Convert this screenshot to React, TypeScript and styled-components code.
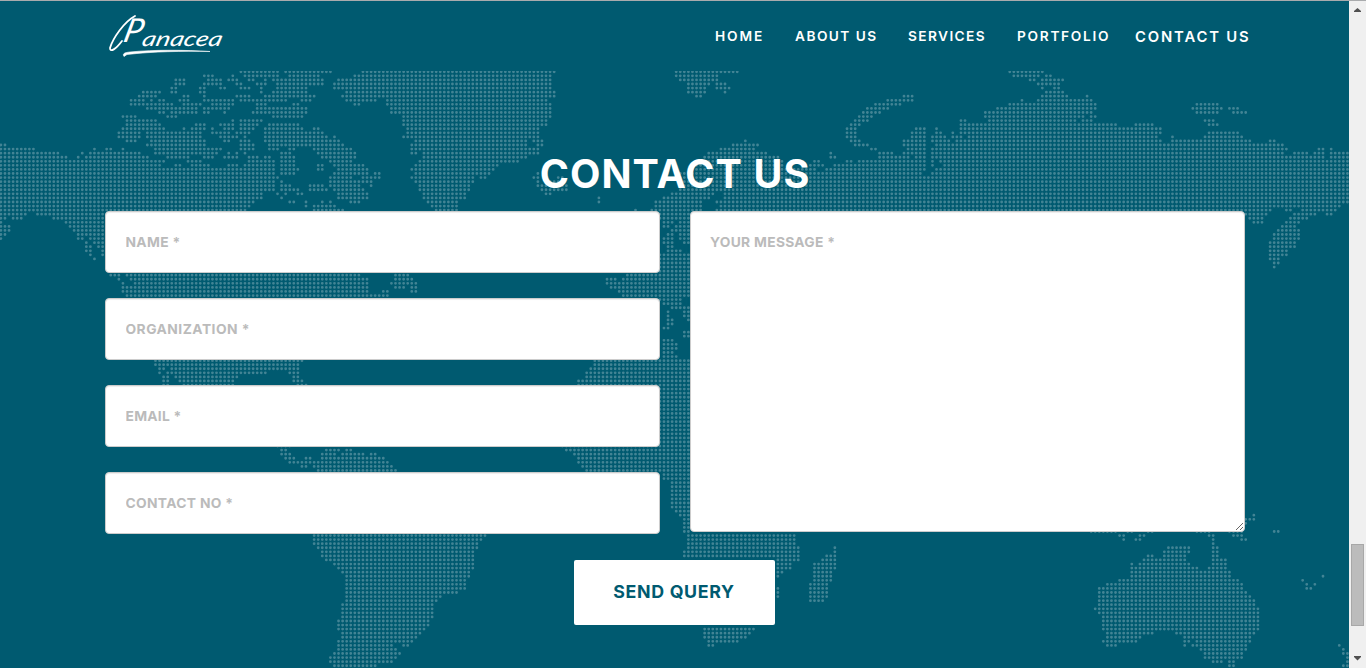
import React from "react";
import styled, { createGlobalStyle } from "styled-components";

const GlobalStyle = createGlobalStyle`
  *, *::before, *::after { box-sizing: border-box; }
  body { margin: 0; background: #005a70; overflow: hidden; }
  body, input, textarea, button { font-family: Inter, "Liberation Sans", sans-serif; }
`;

/*
 * Dotted world map. Each entry is one row of dots; a letter selects the strip
 * the following spans are measured from, and spans are in thirds of a pixel.
 */
const STRIPS: Record<string, number> = {
  A: 0, B: 1020, C: 2040, D: 3048, E: 270, F: 1620, G: 780, H: 1680,
};

const ROWS: Record<number, string> = {
  0: "A718-838 852-996 B64-645 1003-1050 C0-176 984-1050 D0-83",
  1: "A608-642 697-700 730-838 864-960 B40-635 1003-1050 C0-115 996-1050 D0-70 88-105",
  2: "A524-556 620-666 684-716 740-765 790-800 814-972 1008-1050 B4-635 1015-1050 C0-115 1046-1050 D40-56 76-144",
  3: "A524-556 608-666 706-728 765-800 826-972 998-1050 B0-635 C20-90 106-138 D64-132",
  4: "A511-532 596-616 656-678 718-755 778-790 826-924 998-1050 B0-635 C20-80 106-150 D76-80 112-132",
  5: "A425-484 511-532 596-616 778-790 814-924 1034-1050 B12-645 C20-80 132-138 D88-144",
  6: "A412-470 547-568 608-616 704-752 790-946 1022-1050 B28-645 C44-66 668-702 D76-156 210-214",
  7: "A388-434 450-460 474-496 535-568 608-702 716-860 900-936 B14-108 135-620 C618-702 1022-1028 D64-230",
  8: "A388-520 547-604 632-702 765-800 876-898 B40-60 136-635 C582-664 984-1050 D0-240 540-606",
  9: "A436-592 608-690 765-920 B148-635 C558-628 948-1050 D0-240 528-618 638-668",
  10: "A474-496 511-592 608-630 670-676 755-920 B148-635 C545-604 912-1050 D0-230 540-606 650-690",
  11: "A364-408 500-532 814-910 B188-635 C533-580 912-1050 D0-206 220-240",
  12: "A376-470 695-700 716-788 B188-622 C521-568 838-860 924-1050 D0-180 196-230 564-596",
  13: "A376-484 584-616 656-704 716-775 802-898 B188-622 C508-545 838-1050 D0-302 355-412 576-606",
  14: "A364-496 547-556 570-616 632-642 668-704 716-765 790-910 936-958 B198-600 C496-533 704-740 765-772 838-1050 D0-436",
  15: "A352-424 436-604 632-690 704-752 790-970 B198-600 C496-533 692-740 765-785 814-822 838-1050 D0-436 576-668",
  16: "A352-420 436-604 656-714 730-740 790-982 998-1008 B188-600 C496-530 692-740 752-800 814-850 860-1050 D0-424 464-472 562-680",
  17: "A376-408 448-616 670-690 716-752 790-1020 B222-565 578-608 C190-198 508-540 668-740 752-810 826-1050 D0-436 464-704 758-778",
  18: "A0-18 436-616 716-765 802-1030 B0-10 210-560 588-608 C156-234 520-568 668-740 765-1050 D0-802",
  19: "A0-104 280-286 316-334 366-370 460-664 716-765 802-836 864-884 936-1050 B0-36 210-600 C120-222 570-592 680-740 752-1050 D0-812 904-922 942-946",
  20: "A0-176 244-248 268-420 460-650 680-690 706-716 730-740 840-874 948-1050 B0-48 210-230 246-600 C84-260 448-454 594-640 668-740 752-1050 D0-802 832-874 892-922 942-998",
  21: "A0-200 232-238 256-445 498-568 608-642 670-714 742-778 790-812 840-886 960-1050 B0-48 246-560 C70-296 448-466 594-692 704-740 752-1050 D0-922 942-998",
  22: "A0-496 560-604 740-824 838-886 984-1050 B0-36 234-538 C60-310 400-420 496-516 533-740 752-765 778-1050 D0-1000",
  23: "A0-484 522-544 570-628 680-714 730-824 840-886 948-970 998-1050 B0-72 222-475 C50-310 388-430 460-740 752-765 790-1050 D0-1000",
  24: "A0-824 840-898 948-970 1010-1050 B0-84 210-466 C30-412 436-740 765-1050 D0-1000",
  25: "A0-824 838-886 998-1050 B12-84 96-120 222-454 588-596 C0-725 752-1050 D0-1000",
  26: "A0-836 984-1050 B0-38 64-120 210-400 418-440 578-600 650-670 C0-1050 D0-1000",
  27: "A0-824 840-850 984-1050 B0-72 76-96 222-400 588-600 625-670 C0-1050 D0-1000",
  28: "A0-824 840-874 924-972 984-1050 B0-62 90-96 234-388 588-680 C0-1050 D0-1000",
  29: "A0-824 840-898 924-982 1000-1050 B0-72 234-388 600-680 1015-1050 C0-110 120-1050 D0-1000",
  30: "A0-790 826-836 850-860 888-910 1010-1050 B0-84 246-376 612-632 990-1050 C0-106 130-1050 D0-1000",
  31: "A0-790 840-848 1010-1050 B0-84 246-376 772-778 966-1050 C0-90 130-1050 D0-1000",
  32: "A0-765 864-884 914-920 960-966 984-992 B28-60 258-352 772-778 942-1050 C0-66 108-1050 D0-1000",
  33: "A0-752 912-920 936-1008 B270-352 942-1050 C0-66 118-1050 D0-970",
  34: "A0-740 936-1030 B282-352 882-888 930-1050 C0-66 106-1050 D0-765 806-826 856-960",
  35: "A0-78 106-330 B960-1050 C0-30 D684-752 832-900 928-948",
  36: "A0-18 36-68 156-330 B960-1050 C0-30 D696-740 820-874",
  37: "A0-6 192-330 B966-1000 1015-1050 C0-30 D708-740 806-850",
  38: "A0-30 204-330 B966-990 1003-1050 C0-30 D796-838",
  39: "A0-30 218-330 B990-1035 C0-30 D782-850",
  40: "A0-18 230-330 B978-1000 1015-1050 C0-30 D770-850",
  41: "A0-6 230-250 268-330 B966-1000 1027-1050 C0-30 D770-850",
  42: "A256-262 280-330 B966-1000 1027-1050 C8-30 D758-838",
  43: "A256-274 292-330 B978-1000 D758-838",
  44: "A256-274 304-330 B978-1022 C0-4 D758-814",
  45: "A268-274 304-330 B960-1050 C0-30 D758-814",
  46: "A280-286 B960-1050 C0-30 D758-790",
  47: "B960-1050 C0-30 D770-790",
  48: "B960-1050 C0-30 D770-776",
  49: "B960-1050 C0-30",
  50: "E56-90 106-810 912-958 F258-450",
  51: "E82-90 118-835 912-970 F196-230 246-450",
  52: "E94-100 130-835 900-982 F196-230 234-450",
  53: "E94-100 106-835 912-946 960-982 F208-450",
  54: "E94-835 876-896 960-982 F232-450",
  55: "E106-896 F244-450",
  56: "F360-425",
  57: "F366-425",
  58: "F390-450",
  59: "F380-390 430-450",
  60: "F380-390 430-450",
  61: "F380-400 442-450",
  62: "F380-400",
  63: "F366-390",
  64: "F430-450",
  65: "F430-450",
  66: "F366-400",
  67: "F366-412",
  68: "F366-412",
  69: "F366-400",
  70: "F366-412",
  71: "E192-636 F160-450",
  72: "E192-208 216-628 F160-450",
  73: "E204-224 240-628 F148-450",
  74: "E204-208 230-530 596-628 F136-450",
  75: "E216-236 254-445 608-628 F136-450",
  76: "E216-236 264-432 608-636 F112-450",
  77: "E216-236 278-432 620-648 F112-450",
  92: "E560-600 F64-450",
  93: "E570-590 704-750 766-786 F76-450",
  94: "E570-600 692-736 752-820 838-858 F100-450",
  95: "E582-614 644-662 692-882 F112-450",
  96: "E594-664 668-896 F112-450",
  97: "E632-650 668-908 F124-450",
  98: "E680-918 F136-450",
  99: "F366-450",
  100: "F366-450",
  108: "F404-450",
  109: "F416-450 D708-716",
  110: "F430-450 D684-716",
  111: "F430-450 D684-692",
  112: "F430-450",
  113: "F430-450 D222-300 330-350 392-410 540-580 640-680 770-790",
  114: "G156-676 H380-706 D306-326 366-388 574-594 648-680",
  115: "G156-664 H380-706 D318-326 354-376 586-594 672-692",
  116: "G156-652 H380-706 D586-594",
  117: "G168-652 H380-718 820-826 D452-520 586-606",
  118: "G180-640 H368-718 820-826 D440-520 586-606",
  119: "G180-640 H368-718 796-826 D392-412 440-508 586-606",
  120: "G194-640 H650-718 782-826 D380-508 586-630",
  121: "G218-640 H650-694 758-826 D342-350 366-520 586-630",
  122: "G230-640 H650-694 758-826 D342-545 574-630",
  123: "G242-630 H650-670 758-814 D342-642",
  124: "G254-630 H650-656 758-814 D342-642 918-922",
  125: "G254-616 H758-814 D306-666 856-862",
  126: "G254-616 H746-802 D270-680 868-874 892-898",
  127: "G254-616 H650-656 746-802 D244-680 868-886",
  128: "G254-592 H650-656 746-802 D244-692",
  129: "G254-545 H650-656 746-802 D244-704",
  130: "G254-532 H746-790 D244-716",
  131: "G242-520 D244-716",
  132: "G242-520 D232-728",
  133: "G242-520 D244-728",
  134: "G242-520 D256-728",
  135: "G230-508 D256-728",
  136: "G230-508 D256-728",
  137: "G230-496 H430-584 D256-728",
  138: "G242-484 H430-572 D268-412 476-716",
  139: "G242-472 H430-560 D268-374 500-704",
  140: "G230-460 H442-532 D256-362 500-522 536-704",
  141: "G230-400 428-446 H442-460 D268-300 500-508 524-692 966-972",
  142: "G230-410 D548-692 978-984",
  143: "G218-422 D560-680 978-998",
  144: "G206-410 D560-680 990-998",
  145: "G206-398 D586-618 636-656 990-998",
  146: "G218-350 D636-656 978-998",
};
for (let r = 78; r <= 91; r++) ROWS[r] = "F360-450";
for (let r = 101; r <= 107; r++) ROWS[r] = "F392-450";

const PITCH = 4.068;
const FIRST_X = 0.9;
const FIRST_Y = 0.8;

function buildMap(): string {
  let d = "";
  Object.entries(ROWS).forEach(([row, spans]) => {
    const columns = new Set<number>();
    let offset = 0;
    spans.split(" ").forEach((token) => {
      let span = token;
      if (STRIPS[token[0]] !== undefined) {
        offset = STRIPS[token[0]];
        span = token.slice(1);
      }
      const [from, to] = span.split("-").map((n) => (Number(n) + offset) / 3);
      const first = Math.ceil((from - FIRST_X - 0.6) / PITCH);
      const last = Math.floor((to - FIRST_X + 0.6) / PITCH);
      for (let c = Math.max(first, 0); c <= last; c++) columns.add(c);
    });
    const y = (FIRST_Y + Number(row) * PITCH).toFixed(2);
    columns.forEach((c) => {
      d += `M${(FIRST_X + c * PITCH).toFixed(2)} ${y}h.01`;
    });
  });
  return d;
}

const MAP_PATH = buildMap();

const Window = styled.div`
  display: flex;
  width: 1366px;
  height: 668px;
  border-top: 1px solid #a9abad;
  background: #005a70;
  overflow: hidden;
`;

const Page = styled.div`
  flex: 1;
  display: flex;
  flex-direction: column;
  min-width: 0;
`;

const Header = styled.header`
  display: flex;
  justify-content: space-between;
  flex: none;
  height: 70px;
  padding: 0 100px 0 105px;
`;

const Logo = styled.svg`
  display: block;
  width: 124px;
  height: 66px;
`;

const Nav = styled.nav`
  display: flex;
  align-items: flex-start;
  padding-top: 26px;
`;

const NavLink = styled.a<{ $width: number; $gap: number; $tracking: number; $active?: boolean }>`
  width: ${(p) => p.$width}px;
  margin-right: ${(p) => p.$gap}px;
  color: #fff;
  font-size: ${(p) => (p.$active ? 14.8 : 13.7)}px;
  font-weight: 600;
  line-height: ${(p) => (p.$active ? 20 : 18)}px;
  letter-spacing: ${(p) => p.$tracking}px;
  white-space: nowrap;
`;

const Section = styled.section`
  position: relative;
  flex: 1;
  overflow: hidden;
`;

const WorldMap = styled.svg`
  position: absolute;
  inset: 0;
  width: 1349px;
  height: 597px;
`;

const Content = styled.form`
  position: relative;
  display: flex;
  flex-direction: column;
  align-items: center;
  width: 1140px;
  margin-left: 105px;
  padding-top: 79px;
`;

const Title = styled.h2`
  margin: 0;
  height: 61px;
  color: #fff;
  font-size: 39.5px;
  font-weight: 700;
  line-height: 48px;
  letter-spacing: 1.05px;
  white-space: nowrap;
`;

const Columns = styled.div`
  display: grid;
  grid-template-columns: 1fr 1fr;
  gap: 30px;
  width: 100%;
`;

const Fields = styled.div`
  display: flex;
  flex-direction: column;
  gap: 25px;
`;

const fieldStyle = `
  display: block;
  width: 100%;
  margin: 0;
  padding: 20px 20px 20px 19.5px;
  border: 1px solid #ccc;
  border-radius: 4px;
  background: #fff;
  box-shadow: inset 0 1px 1px rgba(0, 0, 0, 0.075);
  color: #555;
  font-size: 13.8px;
  font-weight: 700;
  line-height: 20px;
  outline: none;
  &::placeholder { color: #bbb; opacity: 1; }
`;

const Field = styled.input<{ $tracking: number }>`
  ${fieldStyle}
  height: 62px;
  letter-spacing: ${(p) => p.$tracking}px;
`;

const Message = styled.textarea`
  ${fieldStyle}
  height: 321px;
  padding-left: 19px;
  resize: both;
  letter-spacing: 0.3px;
`;

const Submit = styled.button`
  width: 201px;
  height: 65px;
  margin-top: 26px;
  margin-right: 2px;
  padding: 0 0 2px;
  border: 0;
  border-radius: 2px;
  background: #fff;
  color: #005a70;
  font-size: 17.8px;
  font-weight: 700;
  letter-spacing: 0.65px;
`;

const Scrollbar = styled.div`
  display: flex;
  flex-direction: column;
  align-items: center;
  flex: none;
  width: 17px;
  background: #f0f0f0;
`;

const Arrow = styled.svg`
  display: block;
  flex: none;
  width: 17px;
  height: 17px;
  fill: #505050;
`;

const Thumb = styled.div`
  width: 13px;
  height: 82px;
  margin-top: 526px;
  margin-bottom: 24px;
  border: 1px solid #a8a8a8;
  background: #bcbcbc;
`;

const Wordmark = styled.text`
  font-family: Lato, sans-serif;
  font-style: italic;
  font-weight: 400;
`;

const LINKS = [
  { label: "HOME", width: 50, gap: 30, tracking: 1.9 },
  { label: "ABOUT US", width: 83, gap: 30, tracking: 1.45 },
  { label: "SERVICES", width: 79, gap: 30, tracking: 1.4 },
  { label: "PORTFOLIO", width: 93, gap: 25, tracking: 1.7 },
  { label: "CONTACT US", width: 114, gap: 0, tracking: 1.85, active: true },
];

const FIELDS = [
  { label: "NAME *", tracking: 0.35 },
  { label: "ORGANIZATION *", tracking: 0.48 },
  { label: "EMAIL *", tracking: 0.25 },
  { label: "CONTACT NO *", tracking: 0.33 },
];

export default function App() {
  return (
    <>
      <GlobalStyle />
      <Window>
        <Page>
          <Header>
            <Logo viewBox="105 1 124 66" fill="#fff" aria-label="Panacea">
              <g transform="translate(0 45.5) skewX(-14)">
                <Wordmark x="121" y="-4" fontSize="33">P</Wordmark>
                <Wordmark x="141" y="0" fontSize="20.5" textLength="80" lengthAdjust="spacingAndGlyphs">anacea</Wordmark>
              </g>
              <path d="M135 16C124 22 113 38 110 48C110 53 116 49 122 41" fill="none" stroke="#fff" strokeWidth="1.8" strokeLinecap="round" />
              <path d="M124 56.5C122 53.5 125 52.5 130 52C155 49.5 185 50 210 51.5C182 51 153 51.5 127 54.5Z" stroke="#fff" strokeWidth=".6" />
            </Logo>
            <Nav>
              {LINKS.map((l) => (
                <NavLink key={l.label} $width={l.width} $gap={l.gap} $tracking={l.tracking} $active={l.active}>{l.label}</NavLink>
              ))}
            </Nav>
          </Header>
          <Section>
            <WorldMap viewBox="0 0 1349 597" aria-hidden="true">
              <path d={MAP_PATH} fill="none" stroke="#fff" strokeOpacity=".26" strokeWidth="2.8" strokeLinecap="round" />
            </WorldMap>
            <Content onSubmit={(e) => e.preventDefault()}>
              <Title>CONTACT US</Title>
              <Columns>
                <Fields>
                  {FIELDS.map((f) => (
                    <Field key={f.label} placeholder={f.label} $tracking={f.tracking} />
                  ))}
                </Fields>
                <Message placeholder="YOUR MESSAGE *" />
              </Columns>
              <Submit>SEND QUERY</Submit>
            </Content>
          </Section>
        </Page>
        <Scrollbar>
          <Arrow viewBox="0 0 17 17"><path d="M5 11V10L8.5 7L12 10V11Z" /></Arrow>
          <Thumb />
          <Arrow viewBox="0 0 17 17"><path d="M5 6V7L8.5 10.5L12 7V6Z" /></Arrow>
        </Scrollbar>
      </Window>
    </>
  );
}
